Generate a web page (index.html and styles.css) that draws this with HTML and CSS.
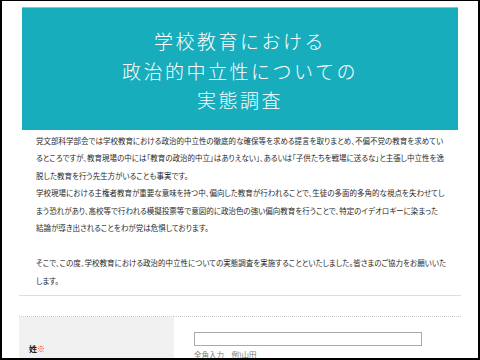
FILE: index.html
```html
<!DOCTYPE html>
<html lang="ja">
<head>
    <meta charset="UTF-8">
    <meta name="viewport" content="width=device-width, initial-scale=1.0">
    <title>学校教育における政治的中立性についての実態調査</title>
    <link rel="stylesheet" href="styles.css">
</head>
<body>
    <div class="frame">
        <div class="container">
            <div class="banner">
                <h1>学校教育における<br>政治的中立性についての<br>実態調査</h1>
            </div>

            <div class="intro">
                <p>党文部科学部会では学校教育における政治的中立性の徹底的な確保等を求める提言を取りまとめ、不偏不党の教育を求めているところですが、教育現場の中には「教育の政治的中立」はありえない」、あるいは「子供たちを戦場に送るな」と主張し中立性を逸脱した教育を行う先生方がいることも事実です。<br>学校現場における主権者教育が重要な意味を持つ中、偏向した教育が行われることで、生徒の多面的多角的な視点を失わせてしまう恐れがあり、高校等で行われる模擬投票等で意図的に政治色の強い偏向教育を行うことで、特定のイデオロギーに染まった<span class="nw">結論</span>が導き出されることをわが党は危惧しております。</p>
                <p>そこで、この度、学校教育における政治的中立性についての実態調査を実施することといたしました。皆さまのご協力をお願いいたします。</p>
            </div>

            <hr class="divider">

            <table class="form">
                <tr>
                    <th>姓<span class="req">※</span></th>
                    <td>
                        <input type="text" class="field">
                        <div class="hint">全角入力　例)山田</div>
                    </td>
                </tr>
            </table>
        </div>
    </div>
</body>
</html>
```

FILE: styles.css
```css
html, body {
    margin: 0;
    padding: 0;
    background-color: #fff;
}

body {
    font-family: "Noto Sans CJK JP", "Noto Sans", sans-serif;
    color: #333;
}

.frame {
    height: 360px;
    box-sizing: border-box;
    border: solid #000;
    border-width: 1px 2px 2px 2px;
    overflow: hidden;
}

.container {
    width: 442px;
    margin: 0 auto;
}

.banner {
    margin: 6px 3px 0;
    padding: 18px 0 15px;
    background-color: #17adbc;
    border-top: 1px solid #6fd0d9;
    text-align: center;
}

.banner h1 {
    margin: 0;
    color: #fff;
    font-size: 19px;
    font-weight: 300;
    line-height: 29.5px;
    letter-spacing: 2.5px;
}

.intro {
    padding: 2px 14px 0 17px;
    font-size: 7.5px;
    line-height: 17.5px;
    font-feature-settings: "palt";
    color: #2a2a2a;
}

.intro p {
    margin: 0 0 17.5px;
}

.intro p:last-child {
    margin-bottom: 0;
}

/* keep the word together so the line breaks where the original does */
.nw {
    white-space: nowrap;
}

.divider {
    margin: 6px 0 0;
    border: none;
    border-top: 1px solid #ddd;
}

.form {
    width: 100%;
    margin-top: 20px;
    border-collapse: collapse;
    border-top: 1px dotted #ccc;
}

.form th {
    width: 145px;
    padding: 20px 0 20px 10px;
    background-color: #f1f1f1;
    text-align: left;
    font-size: 8px;
    font-weight: bold;
    color: #222;
}

.req {
    color: #f22;
}

.form td {
    padding: 15px 20px 20px;
    vertical-align: top;
}

.field {
    display: block;
    width: 228px;
    height: 14px;
    margin: 0;
    padding: 0;
    box-sizing: border-box;
    border: 1px solid #aaa;
}

.hint {
    margin-top: 3px;
    font-size: 7.5px;
    color: #777;
}
```
